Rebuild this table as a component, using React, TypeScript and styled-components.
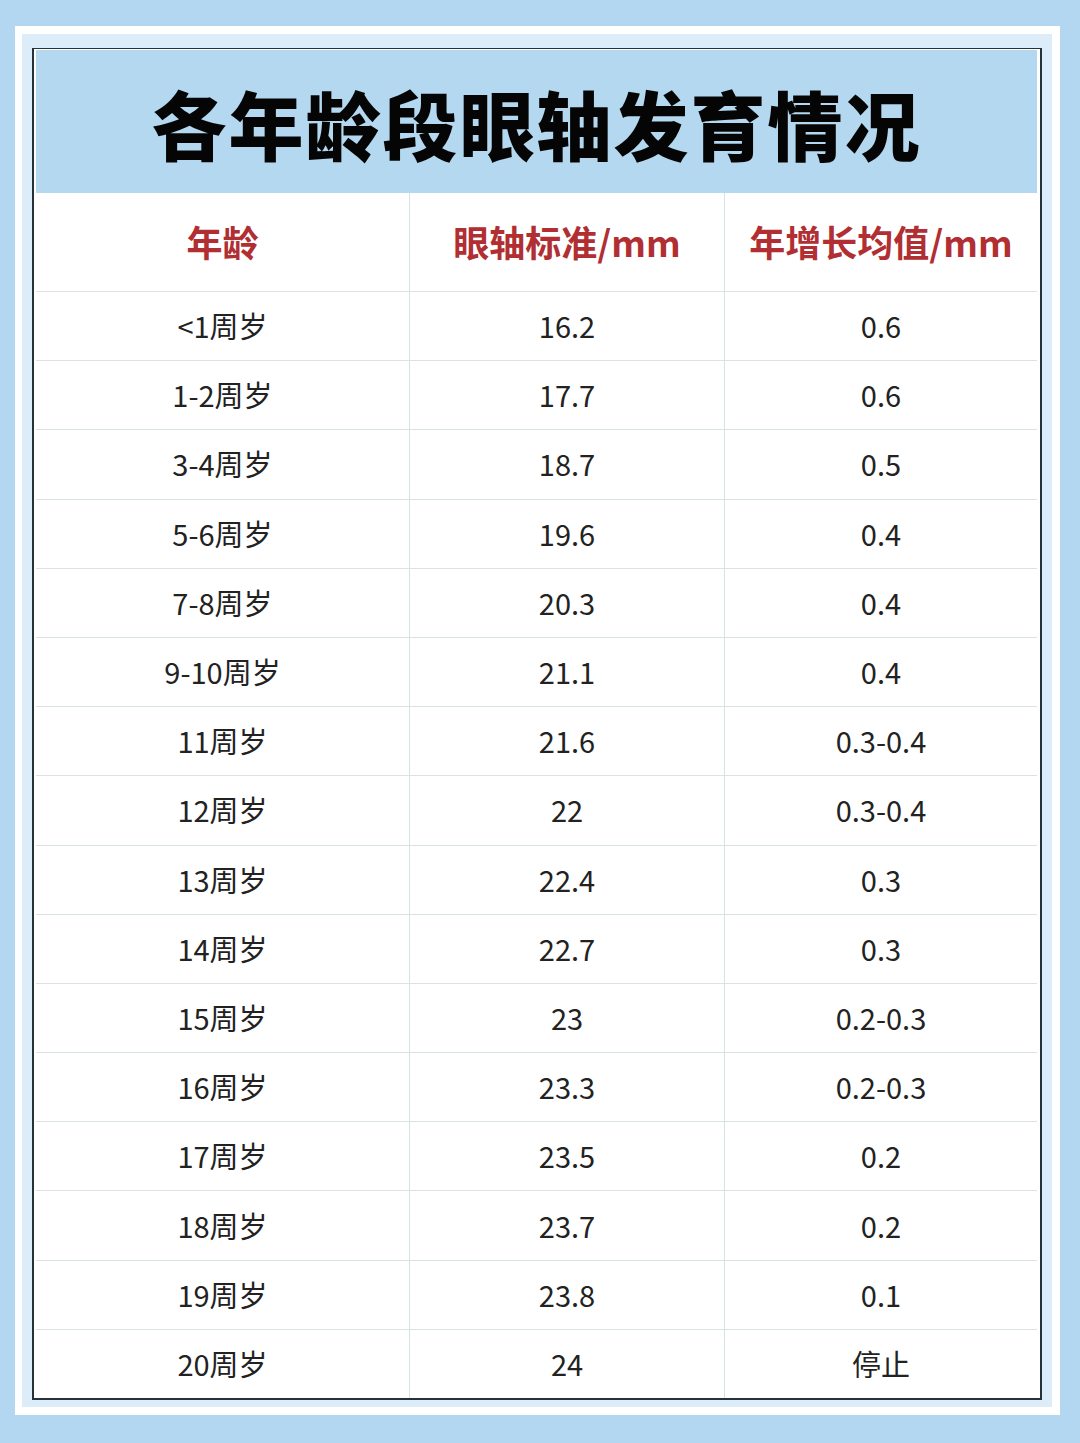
import React from "react";
import styled, { createGlobalStyle } from "styled-components";

const GlobalStyle = createGlobalStyle`
  html, body {
    margin: 0;
    padding: 0;
    background: #b3d7f0;
  }
  body {
    font-family: "Noto Sans CJK SC", "Noto Sans", sans-serif;
  }
`;

const rows: [string, string, string][] = [
  ["<1周岁", "16.2", "0.6"],
  ["1-2周岁", "17.7", "0.6"],
  ["3-4周岁", "18.7", "0.5"],
  ["5-6周岁", "19.6", "0.4"],
  ["7-8周岁", "20.3", "0.4"],
  ["9-10周岁", "21.1", "0.4"],
  ["11周岁", "21.6", "0.3-0.4"],
  ["12周岁", "22", "0.3-0.4"],
  ["13周岁", "22.4", "0.3"],
  ["14周岁", "22.7", "0.3"],
  ["15周岁", "23", "0.2-0.3"],
  ["16周岁", "23.3", "0.2-0.3"],
  ["17周岁", "23.5", "0.2"],
  ["18周岁", "23.7", "0.2"],
  ["19周岁", "23.8", "0.1"],
  ["20周岁", "24", "停止"],
];

export default function App() {
  return (
    <>
      <GlobalStyle />
      <Page>
        <Frame>
          <Inner>
            <Table>
              <Title>各年龄段眼轴发育情况</Title>
              <HeaderRow>
                <HeadCell>年龄</HeadCell>
                <HeadCell>眼轴标准/mm</HeadCell>
                <HeadCell>年增长均值/mm</HeadCell>
              </HeaderRow>
              {rows.map(([age, axis, growth], i) => (
                <Row key={age} $last={i === rows.length - 1}>
                  <Cell>{age}</Cell>
                  <Cell>{axis}</Cell>
                  <Cell>{growth}</Cell>
                </Row>
              ))}
            </Table>
          </Inner>
        </Frame>
      </Page>
    </>
  );
}

const Page = styled.div`
  width: 1080px;
  height: 1443px;
  box-sizing: border-box;
  padding: 26px 20px 28px 15px;
  background: #b3d7f0;
`;

const Frame = styled.div`
  height: 100%;
  box-sizing: border-box;
  background: #ffffff;
  padding: 8px 8px 8px 7px;
`;

const Inner = styled.div`
  height: 100%;
  box-sizing: border-box;
  background: #dcecf9;
  padding: 14px 10px 7px 10px;
`;

const Table = styled.div`
  height: 100%;
  box-sizing: border-box;
  border: 2px solid #26323a;
  border-top-width: 1.5px;
  background: #ffffff;
  display: flex;
  flex-direction: column;
  padding: 1px 3px 0 2px;
`;

const Title = styled.div`
  height: 143px;
  flex: none;
  background: #b3d8f0;
  display: flex;
  align-items: center;
  justify-content: center;
  font-size: 75px;
  font-weight: 900;
  color: #050505;
  letter-spacing: 2px;
  padding-top: 2px;
  box-sizing: border-box;
`;

const HeaderRow = styled.div`
  height: 98px;
  flex: none;
  display: grid;
  grid-template-columns: 373px 315px 1fr;
  border-bottom: 1.5px solid #dbe3e3;
`;

const HeadCell = styled.div`
  display: flex;
  align-items: center;
  justify-content: center;
  font-size: 36px;
  font-weight: 700;
  color: #b12f32;
  padding-bottom: 2px;
  & + & {
    border-left: 1.5px solid #d5e4e2;
  }
`;

const Row = styled.div<{ $last: boolean }>`
  flex: 1;
  display: grid;
  grid-template-columns: 373px 315px 1fr;
  border-bottom: ${(p) => (p.$last ? "none" : "1.5px solid #d9e3e2")};
`;

const Cell = styled.div`
  display: flex;
  align-items: center;
  justify-content: center;
  font-family: "Noto Sans CJK SC", "Noto Sans", sans-serif;
  font-size: 29px;
  color: #222222;
  padding-bottom: 2px;
  & + & {
    border-left: 1.5px solid #d5e4e2;
  }
`;
